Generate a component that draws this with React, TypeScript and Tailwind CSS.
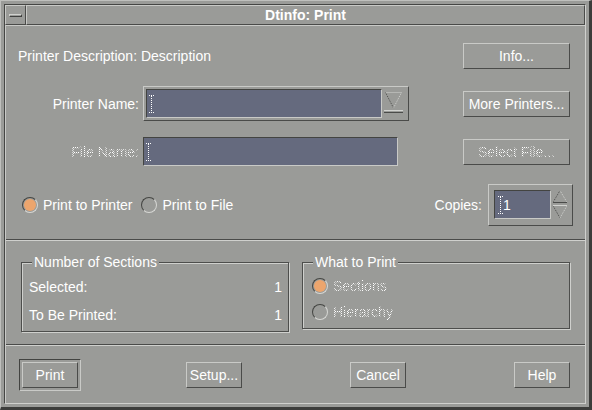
import React from "react";

const RAISED =
  "border border-t-[#c9cac7] border-l-[#c9cac7] border-b-[#4a4b49] border-r-[#4a4b49]";
const SUNKEN =
  "border border-t-[#434441] border-l-[#434441] border-b-[#c9cac7] border-r-[#c9cac7]";
const STIPPLE =
  "bg-[image:repeating-conic-gradient(#ffffff_0_25%,transparent_0_50%)] bg-[length:2px_2px] bg-clip-text text-transparent";

function IBeam() {
  return (
    <svg width="5" height="18" viewBox="0 0 5 18" className="shrink-0">
      <line x1="0" y1="0.5" x2="5" y2="0.5" stroke="#ffffff" strokeDasharray="1 1" />
      <line x1="0" y1="17.5" x2="5" y2="17.5" stroke="#ffffff" strokeDasharray="1 1" />
      <line x1="2.5" y1="1" x2="2.5" y2="17" stroke="#ffffff" strokeDasharray="1 1" />
    </svg>
  );
}

function Btn({ label, w = 107, disabled = false }: { label: string; w?: number; disabled?: boolean }) {
  return (
    <div
      className={`${RAISED} h-[26px] flex items-center justify-center shrink-0 text-[14px] leading-[16px]`}
      style={{ width: w }}
    >
      <span className={disabled ? STIPPLE : "text-white"}>{label}</span>
    </div>
  );
}

function Radio({ on }: { on: boolean }) {
  return (
    <div className="w-[16px] h-[16px] rounded-full border border-t-[#444542] border-l-[#444542] border-b-[#d6d7d4] border-r-[#d6d7d4] flex items-center justify-center shrink-0">
      {on && <div className="w-[12px] h-[12px] rounded-full bg-[#eca56d]" />}
    </div>
  );
}

function Group({
  title,
  h,
  children,
  className = "",
}: {
  title: string;
  h: number;
  children: React.ReactNode;
  className?: string;
}) {
  return (
    <div
      className={`relative w-[268px] border border-[#4d4e4c] shadow-[1px_1px_0_#cfd0cd,inset_1px_1px_0_#cfd0cd] ${className}`}
      style={{ height: h }}
    >
      <div className="absolute left-[10px] top-[-9px] px-[2px] bg-[#9a9b98] text-white text-[14px] leading-[16px]">
        {title}
      </div>
      {children}
    </div>
  );
}

export default function App() {
  return (
    <div className="w-[592px] h-[410px] bg-[#9a9b98] border-t border-l border-t-[#bfc0bd] border-l-[#bfc0bd] border-r-[3px] border-b-[3px] border-r-[#3c3d3b] border-b-[#3c3d3b] p-[3px] font-['Liberation_Sans',Arial,sans-serif] text-white select-none">
      <div className="w-full h-full border border-t-[#454644] border-l-[#454644] border-b-[#cfd0cd] border-r-[#cfd0cd] flex flex-col">
        {/* title bar */}
        <div className="h-[20px] flex shrink-0">
          <div className={`${RAISED} w-[21px] h-full flex items-center justify-center`}>
            <div className="w-[13px] h-[3px] border-t border-l border-t-[#d0d1ce] border-l-[#d0d1ce] border-b border-r border-b-[#3f403e] border-r-[#3f403e]" />
          </div>
          <div className={`${RAISED} flex-1 h-full flex items-center justify-center font-bold text-[14px] leading-[16px]`}>
            Dtinfo: Print
          </div>
        </div>

        {/* content */}
        <div className="flex-1 flex flex-col border-t border-l border-t-[#c9cac7] border-l-[#c9cac7]">
          {/* section A */}
          <div className="h-[213px] shrink-0 pr-[15px] pt-[17px] flex flex-col">
            <div className="h-[26px] flex items-center">
              <span className="ml-[12px] text-[14px] leading-[16px]">Printer Description: Description</span>
              <div className="ml-auto">
                <Btn label="Info..." />
              </div>
            </div>

            <div className="mt-[17px] h-[35px] flex items-center">
              <div className="w-[133px] text-right text-[14px] leading-[16px]">Printer Name:</div>
              <div className={`${RAISED} ml-[4px] w-[266px] h-[35px] p-[2px] flex`}>
                <div className={`${SUNKEN} w-[236px] h-[29px] bg-[#656a7e] flex items-center pl-[2px]`}>
                  <IBeam />
                </div>
                <div className="flex-1 flex items-start justify-center pt-[1px]">
                  <svg width="20" height="24" viewBox="0 0 20 24">
                    <line x1="1.5" y1="2.5" x2="17.5" y2="2.5" stroke="#d2d3d0" strokeDasharray="1 1" />
                    <line x1="1.5" y1="2.5" x2="9.5" y2="18" stroke="#4a4b49" strokeDasharray="1 1" />
                    <line x1="17.5" y1="2.5" x2="9.5" y2="18" stroke="#d2d3d0" strokeDasharray="1 1" />
                    <line x1="0" y1="20.5" x2="19" y2="20.5" stroke="#d2d3d0" />
                    <line x1="0" y1="22.5" x2="19" y2="22.5" stroke="#4a4b49" />
                  </svg>
                </div>
              </div>
              <div className="ml-auto">
                <Btn label="More Printers..." />
              </div>
            </div>

            <div className="mt-[16px] h-[29px] flex items-center">
              <div className="w-[133px] text-right text-[14px] leading-[16px]">
                <span className={STIPPLE}>File Name:</span>
              </div>
              <div className={`${SUNKEN} ml-[4px] w-[255px] h-[29px] bg-[#656a7e] flex items-center pl-[2px]`}>
                <IBeam />
              </div>
              <div className="ml-auto">
                <Btn label="Select File..." disabled />
              </div>
            </div>

            <div className="mt-[18px] h-[42px] flex items-center text-[14px] leading-[16px]">
              <div className="ml-[16px] flex items-center">
                <Radio on />
                <span className="ml-[5px]">Print to Printer</span>
              </div>
              <div className="ml-[9px] flex items-center">
                <Radio on={false} />
                <span className="ml-[5px]">Print to File</span>
              </div>
              <span className="ml-auto">Copies:</span>
              <div className={`${RAISED} ml-[6px] mr-[-3px] w-[85px] h-[42px] p-[5px] flex`}>
                <div className={`${SUNKEN} w-[57px] h-[29px] bg-[#656a7e] flex items-center pl-[3px]`}>
                  <IBeam />
                  <span className="ml-[0px] text-[14px] leading-[16px]">1</span>
                </div>
                <div className="ml-[2px]">
                  <svg width="14" height="29" viewBox="0 0 14 29">
                    <line x1="7" y1="0.5" x2="0.5" y2="11.5" stroke="#4a4b49" strokeDasharray="1 1" />
                    <line x1="7" y1="0.5" x2="13.5" y2="11.5" stroke="#d2d3d0" strokeDasharray="1 1" />
                    <line x1="0" y1="12.5" x2="14" y2="12.5" stroke="#4a4b49" />
                    <line x1="0" y1="15.5" x2="14" y2="15.5" stroke="#d2d3d0" />
                    <line x1="0.5" y1="16.5" x2="7" y2="28" stroke="#4a4b49" strokeDasharray="1 1" />
                    <line x1="13.5" y1="16.5" x2="7" y2="28" stroke="#d2d3d0" strokeDasharray="1 1" />
                  </svg>
                </div>
              </div>
            </div>
          </div>

          <div className="h-[2px] shrink-0 border-t border-b border-t-[#4a4b49] border-b-[#cfd0cd]" />

          {/* section B */}
          <div className="h-[103px] shrink-0 pt-[21px] flex items-start text-[14px] leading-[16px]">
            <Group title="Number of Sections" h={70} className="ml-[15px]">
              <div className="pt-[16px] pl-[7px] pr-[6px]">
                <div className="flex justify-between">
                  <span>Selected:</span>
                  <span>1</span>
                </div>
                <div className="mt-[12px] flex justify-between">
                  <span>To Be Printed:</span>
                  <span>1</span>
                </div>
              </div>
            </Group>
            <Group title="What to Print" h={67} className="ml-[13px]">
              <div className="pt-[15px] pl-[9px]">
                <div className="flex items-center">
                  <Radio on />
                  <span className={`ml-[5px] ${STIPPLE}`}>Sections</span>
                </div>
                <div className="mt-[10px] flex items-center">
                  <Radio on={false} />
                  <span className={`ml-[5px] ${STIPPLE}`}>Hierarchy</span>
                </div>
              </div>
            </Group>
          </div>

          <div className="h-[2px] shrink-0 border-t border-b border-t-[#4a4b49] border-b-[#cfd0cd]" />

          {/* section C */}
          <div className="flex-1 pt-[13px] flex items-start">
            <div className={`${SUNKEN} ml-[13px] p-[2px]`}>
              <Btn label="Print" w={56} />
            </div>
            <div className="ml-[105px] mt-[3px]">
              <Btn label="Setup..." w={56} />
            </div>
            <div className="ml-[108px] mt-[3px]">
              <Btn label="Cancel" w={56} />
            </div>
            <div className="ml-[108px] mt-[3px]">
              <Btn label="Help" w={56} />
            </div>
          </div>
        </div>
      </div>
    </div>
  );
}
